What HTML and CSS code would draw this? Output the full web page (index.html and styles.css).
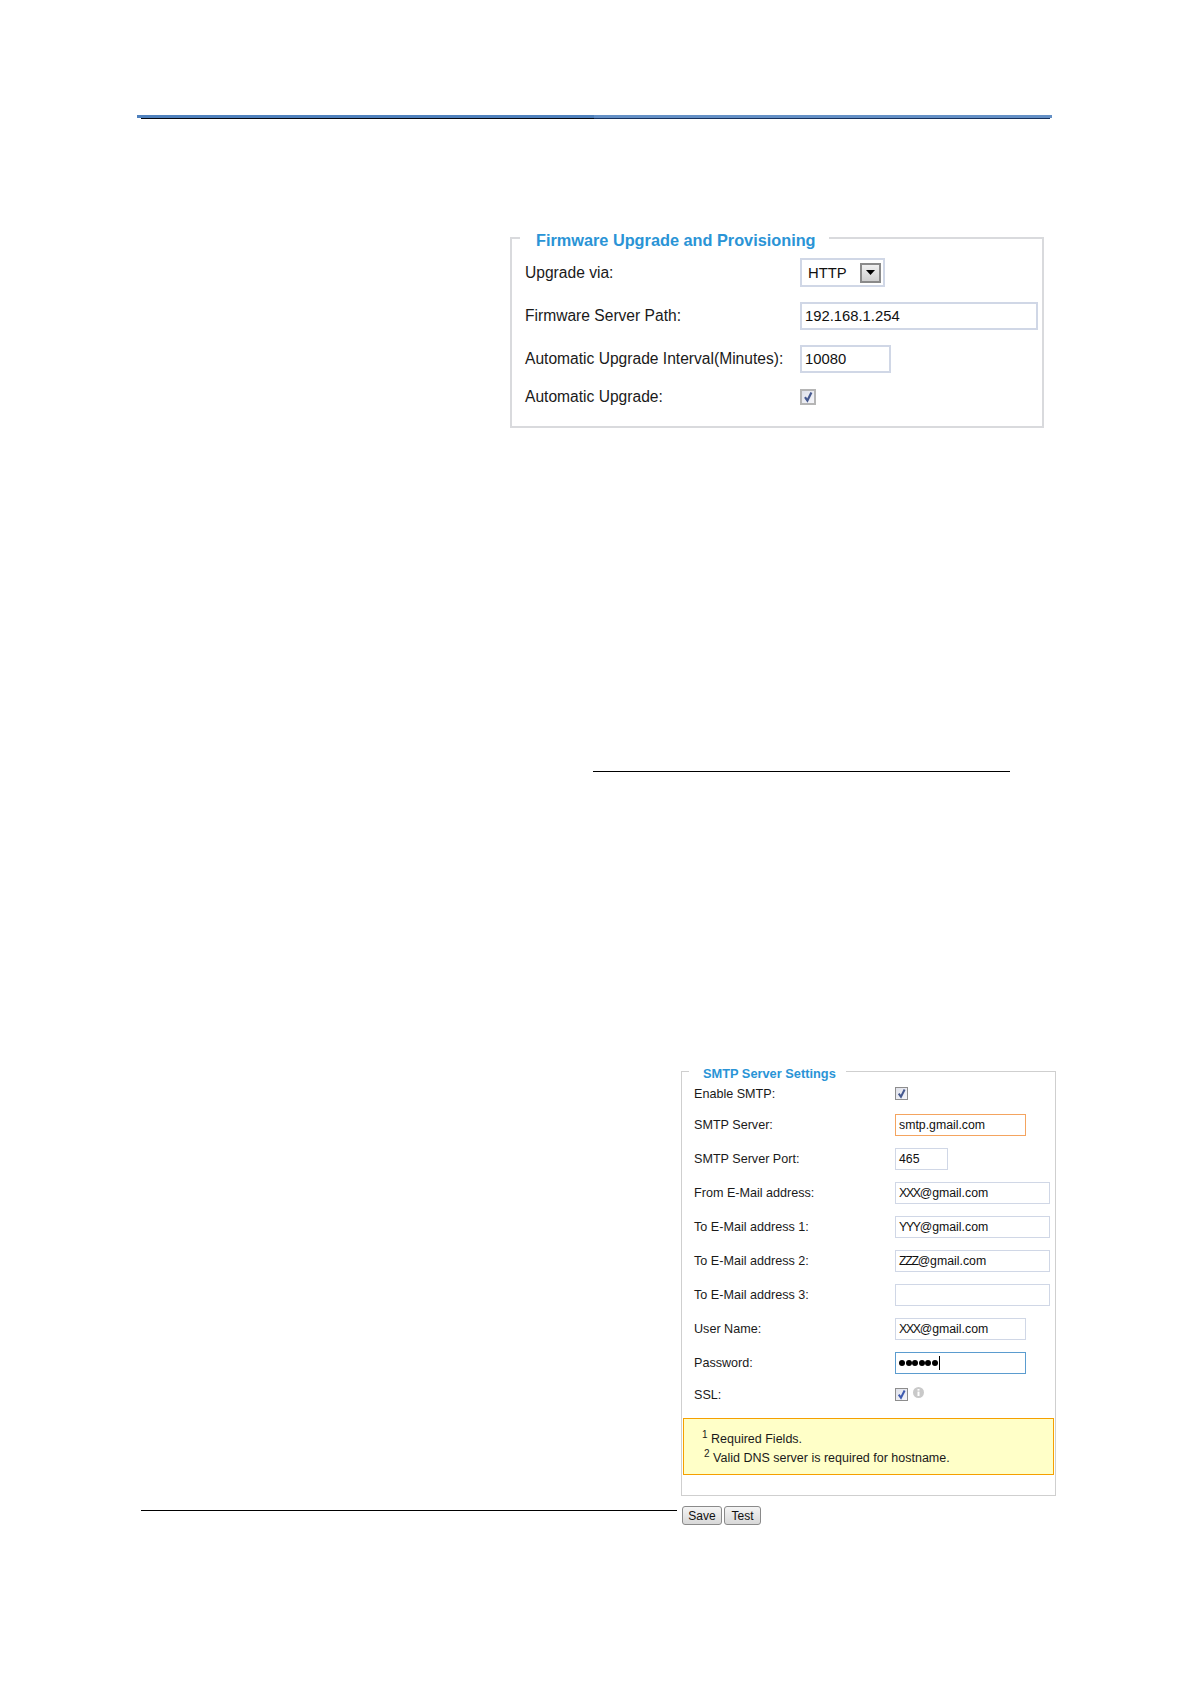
FILE: index.html
```html
<!DOCTYPE html>
<html>
<head>
  <meta charset="utf-8" />
  <title>Firmware and SMTP Settings</title>
  <link rel="stylesheet" href="styles.css">
</head>
<body>
  <div class="head-rule">
    <div class="head-blue"></div>
    <div class="head-shadow"></div>
  </div>

  <fieldset class="panel fw-panel">
    <legend>Firmware Upgrade and Provisioning</legend>
    <div class="row fw-row r1">
      <span class="label">Upgrade via:</span>
      <div class="field select-box">
        <span>HTTP</span>
        <span class="arrow-btn"><svg width="9" height="5" viewBox="0 0 9 5"><path d="M0 0h9L4.5 5z" fill="#000"/></svg></span>
      </div>
    </div>
    <div class="row fw-row r2">
      <span class="label">Firmware Server Path:</span>
      <div class="field w-path">192.168.1.254</div>
    </div>
    <div class="row fw-row r3">
      <span class="label">Automatic Upgrade Interval(Minutes):</span>
      <div class="field w-short">10080</div>
    </div>
    <div class="row fw-row r4">
      <span class="label">Automatic Upgrade:</span>
      <span class="check check-big"><svg viewBox="0 0 12 12"><path d="M3 6.2l2.4 3.4L9.4 1.6" fill="none" stroke="#46598f" stroke-width="2.2"/></svg></span>
    </div>
  </fieldset>

  <div class="mid-rule"></div>

  <fieldset class="panel smtp-panel">
    <legend>SMTP Server Settings</legend>
    <div class="row smtp-row first">
      <span class="label">Enable SMTP:</span>
      <span class="check"><svg viewBox="0 0 12 12"><path d="M3 6.2l2.4 3.4L9.4 1.6" fill="none" stroke="#46598f" stroke-width="2.2"/></svg></span>
    </div>
    <div class="row smtp-row server-row">
      <span class="label">SMTP Server:</span>
      <div class="field w-mid required">smtp.gmail.com</div>
    </div>
    <div class="row smtp-row">
      <span class="label">SMTP Server Port:</span>
      <div class="field w-port">465</div>
    </div>
    <div class="row smtp-row">
      <span class="label">From E-Mail address:</span>
      <div class="field w-long"><span><span class="tight">XXX</span>@gmail.com</span></div>
    </div>
    <div class="row smtp-row">
      <span class="label">To E-Mail address 1:</span>
      <div class="field w-long"><span><span class="tight">YYY</span>@gmail.com</span></div>
    </div>
    <div class="row smtp-row">
      <span class="label">To E-Mail address 2:</span>
      <div class="field w-long"><span><span class="tight">ZZZ</span>@gmail.com</span></div>
    </div>
    <div class="row smtp-row">
      <span class="label">To E-Mail address 3:</span>
      <div class="field w-long"></div>
    </div>
    <div class="row smtp-row">
      <span class="label">User Name:</span>
      <div class="field w-mid"><span><span class="tight">XXX</span>@gmail.com</span></div>
    </div>
    <div class="row smtp-row">
      <span class="label">Password:</span>
      <div class="field w-mid focused">
        <span class="dots"><i></i><i></i><i></i><i></i><i></i><i></i></span><span class="caret"></span>
      </div>
    </div>
    <div class="row smtp-row ssl-row">
      <span class="label">SSL:</span>
      <span class="check"><svg viewBox="0 0 12 12"><path d="M3 6.2l2.4 3.4L9.4 1.6" fill="none" stroke="#3f5bb0" stroke-width="2.2"/></svg></span>
      <span class="info"><svg width="11" height="11" viewBox="0 0 11 11"><circle cx="5.5" cy="5.5" r="5.5" fill="#c9c9c9"/><rect x="4.5" y="2" width="2" height="1.6" fill="#fff"/><rect x="4.5" y="4.6" width="2" height="4.4" fill="#fff"/></svg></span>
    </div>
    <div class="notice">
      <p><sup>1</sup> Required Fields.</p>
      <p class="note-two"><sup>2</sup> Valid DNS server is required for hostname.</p>
    </div>
  </fieldset>

  <div class="foot-row">
    <div class="foot-rule"></div>
    <button type="button" class="btn btn-save">Save</button>
    <button type="button" class="btn btn-test">Test</button>
  </div>
</body>
</html>
```

FILE: styles.css
```css
body {
  margin: 0;
  background: #fff;
  font-family: "Liberation Sans", Arial, sans-serif;
  color: #1a1a1a;
}
.head-rule {
  margin: 115px 0 0 137px;
  width: 915px;
}
.head-blue {
  height: 3px;
  background: linear-gradient(90deg, #4f81bd 457px, #6490c6 457px);
}
.head-shadow {
  height: 1px;
  margin: 0 2px 0 4px;
  background: linear-gradient(90deg, #05080f 453px, #16305c 453px);
}
.panel {
  margin: 0;
  padding: 0;
  min-width: 0;
  border: 2px solid #d9dadd;
  box-sizing: border-box;
}
.panel legend {
  color: #2a94d6;
  font-weight: bold;
}
.fw-panel {
  width: 534px;
  height: 202px;
  margin: 107px 0 0 510px;
  padding: 0 4px 0 13px;
}
.fw-panel legend {
  font-size: 16.3px;
  line-height: 18px;
  margin-left: -5px;
  padding: 5px 13px 1px 16px;
}
.row {
  display: flex;
  align-items: center;
}
.label {
  flex-shrink: 0;
}
.fw-row {
  font-size: 15.6px;
}
.fw-row .label {
  width: 275px;
}
.fw-row.r1 { height: 29px; margin-top: 8px; }
.fw-row.r2 { height: 28px; margin-top: 15px; }
.fw-row.r3 { height: 28px; margin-top: 15px; }
.fw-row.r4 { height: 15px; margin-top: 16px; }
.field {
  box-sizing: border-box;
  border: 2px solid #d0d7e6;
  background: #fff;
  color: #111;
  display: flex;
  align-items: center;
}
.fw-row .field {
  height: 100%;
  padding-left: 3px;
  font-size: 14.8px;
}
.fw-row .select-box {
  width: 85px;
  justify-content: space-between;
  padding: 0 2px 0 6px;
}
.arrow-btn {
  width: 21px;
  height: 20px;
  box-sizing: border-box;
  border: 2px solid #8a8a8a;
  background: linear-gradient(#f0f0f0, #cfcfcf);
  display: flex;
  align-items: center;
  justify-content: center;
}
.w-path { width: 238px; }
.w-short { width: 91px; }
.check {
  width: 13px;
  height: 13px;
  box-sizing: border-box;
  border: 1px solid #8d8d8d;
  background: linear-gradient(135deg, #dfe1ea, #f6f6fa);
  display: block;
}
.check svg {
  display: block;
  width: 100%;
  height: 100%;
}
.check-big {
  width: 16px;
  height: 16px;
  border: 2px solid #b5b5b5;
}
.smtp-panel {
  width: 375px;
  height: 435px;
  margin: 289px 0 0 681px;
  padding: 0 4px 0 12px;
  border-width: 1px;
  border-color: #cfcfcf;
}
.smtp-panel legend {
  font-size: 12.8px;
  line-height: 15px;
  margin-left: -5px;
  padding: 5px 10px 0 14px;
}
.smtp-row {
  height: 22px;
  margin-top: 12px;
  font-size: 12.6px;
}
.smtp-row.first {
  height: 13px;
  margin-top: 6px;
}
.smtp-row.server-row {
  margin-top: 14px;
}
.smtp-row .label {
  width: 201px;
}
.smtp-row .field {
  height: 100%;
  border-width: 1px;
  padding-left: 3px;
  font-size: 12.3px;
}
.tight {
  letter-spacing: -1.3px;
}
.w-mid { width: 131px; }
.w-port { width: 53px; }
.w-long { width: 155px; }
.required.field {
  border-color: #f4a460;
}
.focused.field {
  border-color: #5b9ccf;
}
.dots {
  display: flex;
  gap: 0.5px;
}
.dots i {
  width: 6px;
  height: 6px;
  border-radius: 50%;
  background: #000;
}
.caret {
  width: 1px;
  height: 14px;
  background: #000;
  margin-left: 1px;
}
.smtp-row.ssl-row {
  height: 13px;
  margin-top: 14px;
}
.info {
  margin: -4px 0 0 5px;
  height: 11px;
}
.info svg {
  display: block;
}
.notice {
  box-sizing: border-box;
  width: 371px;
  height: 57px;
  margin: 17px 0 0 -11px;
  padding: 11px 0 0 18px;
  background: #ffffc8;
  border: 1px solid #f5a000;
  font-size: 12.5px;
}
.notice p {
  margin: 0;
  line-height: 19px;
}
.notice sup {
  font-size: 10px;
  line-height: 0;
  vertical-align: 5px;
}
.note-two {
  padding-left: 2px;
}
.mid-rule {
  width: 417px;
  height: 1px;
  background: #000;
  margin: 343px 0 0 593px;
}
.foot-row {
  display: flex;
  margin: 10px 0 0 141px;
}
.foot-rule {
  width: 536px;
  height: 1px;
  background: #000;
  margin: 4px 5px 0 0;
}
.btn {
  height: 19px;
  padding: 0;
  margin: 0 2px 0 0;
  font-family: inherit;
  font-size: 12px;
  color: #111;
  background: linear-gradient(#f4f4f4, #d8d8d8);
  border: 1px solid #8a8a8a;
  border-radius: 3px;
}
.btn-save { width: 40px; }
.btn-test { width: 37px; }
```
